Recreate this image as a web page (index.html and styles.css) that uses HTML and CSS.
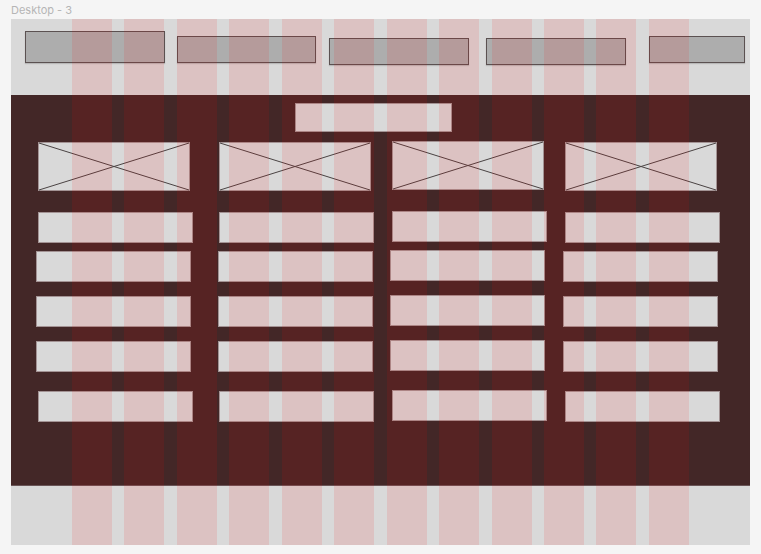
FILE: index.html
```html
<!DOCTYPE html>
<html lang="en">
<head>
  <meta charset="UTF-8">
  <meta name="viewport" content="width=device-width, initial-scale=1.0">
  <title>Desktop - 3</title>
  <link rel="stylesheet" href="styles.css">
</head>
<body>

  <div class="canvas">
    <div class="frame-label">Desktop - 3</div>

    <div class="frame">
      <header class="top-bar">
        <div class="nav-box nav-logo"></div>
        <div class="nav-box nav-b"></div>
        <div class="nav-box nav-c"></div>
        <div class="nav-box nav-d"></div>
        <div class="nav-box nav-e"></div>
      </header>

      <main class="content">
        <div class="heading-box"></div>

        <div class="card-grid">
          <div class="card">
            <div class="placeholder">
              <svg viewBox="0 0 100 100" preserveAspectRatio="none"><line x1="0" y1="0" x2="100" y2="100" vector-effect="non-scaling-stroke"/><line x1="0" y1="100" x2="100" y2="0" vector-effect="non-scaling-stroke"/></svg>
            </div>
            <div class="line line-inset row-1"></div>
            <div class="line row-2"></div>
            <div class="line row-3"></div>
            <div class="line row-4"></div>
            <div class="line line-inset row-5"></div>
          </div>

          <div class="card card-narrow">
            <div class="placeholder">
              <svg viewBox="0 0 100 100" preserveAspectRatio="none"><line x1="0" y1="0" x2="100" y2="100" vector-effect="non-scaling-stroke"/><line x1="0" y1="100" x2="100" y2="0" vector-effect="non-scaling-stroke"/></svg>
            </div>
            <div class="line line-inset row-1"></div>
            <div class="line row-2"></div>
            <div class="line row-3"></div>
            <div class="line row-4"></div>
            <div class="line line-inset row-5"></div>
          </div>

          <div class="card card-raised">
            <div class="placeholder">
              <svg viewBox="0 0 100 100" preserveAspectRatio="none"><line x1="0" y1="0" x2="100" y2="100" vector-effect="non-scaling-stroke"/><line x1="0" y1="100" x2="100" y2="0" vector-effect="non-scaling-stroke"/></svg>
            </div>
            <div class="line line-inset row-1"></div>
            <div class="line row-2"></div>
            <div class="line row-3"></div>
            <div class="line row-4"></div>
            <div class="line line-inset row-5"></div>
          </div>

          <div class="card">
            <div class="placeholder">
              <svg viewBox="0 0 100 100" preserveAspectRatio="none"><line x1="0" y1="0" x2="100" y2="100" vector-effect="non-scaling-stroke"/><line x1="0" y1="100" x2="100" y2="0" vector-effect="non-scaling-stroke"/></svg>
            </div>
            <div class="line line-inset row-1"></div>
            <div class="line row-2"></div>
            <div class="line row-3"></div>
            <div class="line row-4"></div>
            <div class="line line-inset row-5"></div>
          </div>
        </div>
      </main>

      <footer class="bottom-bar"></footer>

      <!-- layout grid overlay (12 columns) -->
      <div class="layout-grid">
        <div></div><div></div><div></div><div></div>
        <div></div><div></div><div></div><div></div>
        <div></div><div></div><div></div><div></div>
      </div>
    </div>
  </div>

</body>
</html>
```

FILE: styles.css
```css
body {
  margin: 0;
  background-color: #f5f5f5;
  font-family: Inter, "Noto Sans", sans-serif;
}
.canvas {
  padding: 3px 0 0 11px;
}
.frame-label {
  font-size: 11px;
  line-height: 15px;
  color: #b5b5b5;
  margin-bottom: 1px;
}
.frame {
  position: relative;
  width: 739px;
  height: 526px;
  background-color: #d9d9d9;
  overflow: hidden;
}

/* header */
.top-bar {
  height: 76px;
  display: flex;
  align-items: flex-start;
  padding-left: 14px;
  box-sizing: border-box;
}
.nav-box {
  box-sizing: border-box;
  height: 27px;
  background-color: #adadad;
  border: 1px solid #5b5151;
  box-shadow: 0 1px 1px rgba(0, 0, 0, 0.15);
}
.nav-logo { width: 140px; height: 32px; margin-top: 12px; }
.nav-b { width: 139px; margin-top: 17px; margin-left: 12px; }
.nav-c { width: 140px; margin-top: 19px; margin-left: 13px; }
.nav-d { width: 140px; margin-top: 19px; margin-left: 17px; }
.nav-e { width: 96px; margin-top: 17px; margin-left: 23px; }

/* dark content area */
.content {
  height: 391px;
  background-color: #432727;
  padding-top: 8px;
  box-sizing: border-box;
  border-bottom: 1px solid #6a5557;
}
.heading-box {
  box-sizing: border-box;
  width: 157px;
  height: 29px;
  margin-left: 284px;
  background-color: #d9d9d9;
  border: 1px solid #a39394;
}
.card-grid {
  display: flex;
  gap: 16px;
  margin-top: 10px;
  padding-left: 25px;
}
.card {
  width: 157px;
  display: flex;
  flex-direction: column;
  align-items: flex-start;
}
.card:first-child {
  margin-right: 9px;
}
.card-narrow .placeholder,
.card-narrow .line-inset {
  margin-left: 1px;
}
.card-narrow {
  margin-right: -1px;
}
.card-raised {
  margin-top: -1px;
}
.placeholder {
  box-sizing: border-box;
  width: 152px;
  height: 49px;
  margin-left: 2px;
  background-color: #d9d9d9;
  border: 1px solid #a39394;
}
.placeholder svg {
  display: block;
  width: 100%;
  height: 100%;
  overflow: visible;
}
.placeholder line {
  stroke: #4a4343;
  stroke-width: 1;
}
.line {
  box-sizing: border-box;
  width: 155px;
  height: 31px;
  background-color: #d9d9d9;
  border: 1px solid #a39394;
}
.line-inset { margin-left: 2px; }
.row-1 { margin-top: 21px; }
.row-2 { margin-top: 8px; }
.row-3 { margin-top: 14px; }
.row-4 { margin-top: 14px; }
.row-5 { margin-top: 19px; }

.bottom-bar {
  height: 59px;
}

/* layout grid overlay */
.layout-grid {
  position: absolute;
  top: 0;
  left: 0;
  right: 0;
  bottom: 0;
  display: grid;
  grid-template-columns: repeat(12, 40px);
  column-gap: 12.45px;
  padding: 0 61px;
  pointer-events: none;
}
.layout-grid div {
  background-color: rgba(255, 0, 0, 0.1);
}
```
